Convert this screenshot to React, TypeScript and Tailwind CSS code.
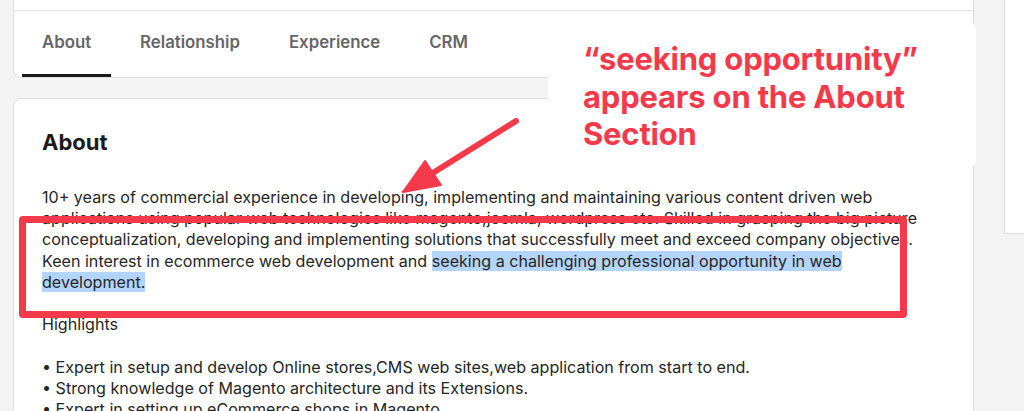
import React from 'react';

const tabs = ['About', 'Relationship', 'Experience', 'CRM'];

const aboutLines = [
  '10+ years of commercial experience in developing, implementing and maintaining various content driven web',
  'applications using popular web technologies like magento,joomla, wordpress etc. Skilled in grasping the big picture',
  'conceptualization, developing and implementing solutions that successfully meet and exceed company objectives.',
];

const bullets = [
  '• Expert in setup and develop Online stores,CMS web sites,web application from start to end.',
  '• Strong knowledge of Magento architecture and its Extensions.',
  '• Expert in setting up eCommerce shops in Magento',
];

function Arrow() {
  return (
    <svg className="absolute left-0 top-0 pointer-events-none" width="1024" height="411" viewBox="0 0 1024 411">
      <line x1="516" y1="121" x2="428" y2="176" stroke="#f43a4a" strokeWidth="6" strokeLinecap="round" />
      <polygon points="403,192 425,161 441,185" fill="#f43a4a" stroke="#f43a4a" strokeWidth="2" strokeLinejoin="round" />
    </svg>
  );
}

export default function App() {
  return (
    <div className="relative h-[411px] w-[1024px] overflow-hidden bg-[#f3f3f3] font-['Inter','Liberation_Sans',sans-serif]">
      <div className="flex">
        {/* main column */}
        <div className="ml-[13px] w-[961px] shrink-0 flex flex-col gap-5">
          <div className="bg-white border border-t-0 border-[#dedede] rounded-b-lg">
            <div className="h-[11px] border-b border-[#dedede]" />
            <div className="flex gap-[9px] pl-[8px] h-[66px]">
              {tabs.map((t, i) => (
                <div
                  key={t}
                  className={`px-5 flex items-center border-b-[3px] text-[16.8px] font-semibold text-[#666] ${
                    i === 0 ? 'border-[#1a1a1a]' : 'border-transparent'
                  }`}
                >
                  {t}
                </div>
              ))}
            </div>
          </div>

          <div className="bg-white border border-[#dedede] rounded-t-lg px-[28px] pt-[29px] h-[400px]">
            <h2 className="text-[22px] leading-[28px] font-bold text-[#1a1a1a]">About</h2>
            <div className="mt-[31px] text-[16.1px] leading-[21.2px] text-[#262626] whitespace-nowrap">
              {aboutLines.map((l) => (
                <div key={l}>{l}</div>
              ))}
              <div>
                Keen interest in ecommerce web development and{' '}
                <span className="bg-[#b3d4fc]">seeking a challenging professional opportunity in web</span>
              </div>
              <div>
                <span className="bg-[#b3d4fc]">development.</span>
              </div>
              <div className="h-[21.2px]" />
              <div>Highlights</div>
              <div className="h-[21.2px]" />
              {bullets.map((b) => (
                <div key={b}>{b}</div>
              ))}
            </div>
          </div>
        </div>

        {/* right sidebar */}
        <div className="ml-[30px] w-[40px] shrink-0 h-[234px] bg-white border border-t-0 border-[#dedede]" />
      </div>

      {/* annotation overlays */}
      <div className="absolute left-[19px] top-[216px] w-[888px] h-[102px] border-[7px] border-[#f43a4a] rounded-[4px] pointer-events-none" />
      <Arrow />
      <div className="absolute left-[548px] top-[22px] w-[428px] h-[146px] bg-white rounded-lg pl-[35px] pt-[18px]">
        <p className="text-[31px] leading-[37.5px] font-bold text-[#f43a4a] tracking-[-0.2px]">
          “seeking opportunity”
          <br />
          appears on the About
          <br />
          Section
        </p>
      </div>
    </div>
  );
}
